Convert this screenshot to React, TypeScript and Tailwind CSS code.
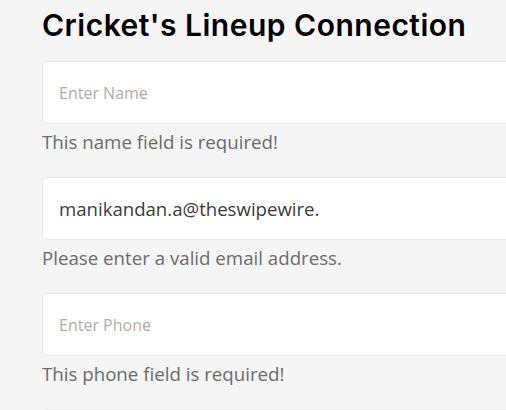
import React from "react";

const fields = [
  { placeholder: "Enter Name", value: "", error: "This name field is required!" },
  { placeholder: "Enter Email", value: "manikandan.a@theswipewire.", error: "Please enter a valid email address." },
  { placeholder: "Enter Phone", value: "", error: "This phone field is required!" },
];

export default function App() {
  return (
    <div className="h-[410px] w-[506px] overflow-hidden bg-[#f5f5f5] pl-[42px]">
      <h1
        className="pt-[5px] text-[30px] font-semibold leading-[40px] tracking-[0.5px] text-black whitespace-nowrap"
        style={{ fontFamily: "Inter, 'Liberation Sans', sans-serif" }}
      >
        Cricket's Lineup Connection
      </h1>
      <div className="mt-[16px] flex flex-col gap-[22px]" style={{ fontFamily: "'Open Sans', sans-serif" }}>
        {fields.map((f) => (
          <div key={f.placeholder} className="flex flex-col">
            <div className="flex h-[63px] w-[520px] items-center rounded-[5px] border border-[#e6e6e6] bg-white pl-[16px]">
              {f.value ? (
                <span className="text-[18.6px] text-[#3b3b3b]">{f.value}</span>
              ) : (
                <span className="pt-[1px] text-[16px] text-[#b3aca6]">{f.placeholder}</span>
              )}
            </div>
            <p className="mt-[4px] text-[18.7px] leading-[27px] text-[#6b6b6b]">{f.error}</p>
          </div>
        ))}
        <div className="h-[63px] w-[520px] shrink-0 rounded-[5px] border border-[#e6e6e6] bg-white" />
      </div>
    </div>
  );
}
